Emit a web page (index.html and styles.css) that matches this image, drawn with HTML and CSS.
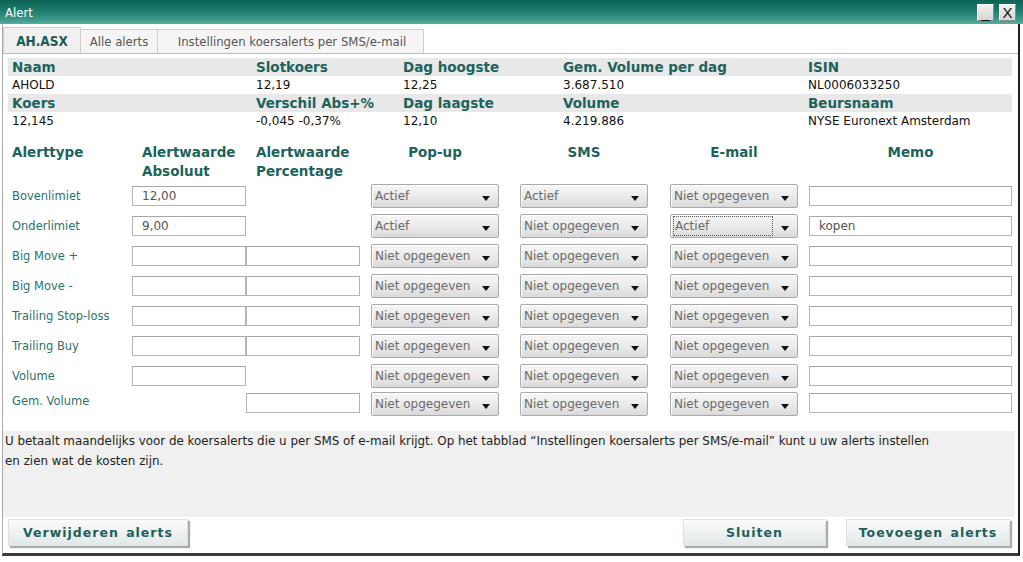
FILE: index.html
```html
<!DOCTYPE html>
<html lang="nl">
<head>
<meta charset="utf-8">
<title>Alert</title>
<link rel="stylesheet" href="styles.css">
</head>
<body>
<div class="titlebar">
  <span class="title">Alert</span>
  <div class="winbtns"><span class="wb">_</span><span class="wb">X</span></div>
</div>
<div class="frame">
  <div class="tabs">
    <div class="tab active">AH.ASX</div>
    <div class="tab t-all">Alle alerts</div>
    <div class="tab t-set">Instellingen koersalerts per SMS/e-mail</div>
  </div>

  <div class="info">
    <div class="irow head"><span>Naam</span><span>Slotkoers</span><span>Dag hoogste</span><span>Gem. Volume per dag</span><span>ISIN</span></div>
    <div class="irow"><span>AHOLD</span><span>12,19</span><span>12,25</span><span>3.687.510</span><span>NL0006033250</span></div>
    <div class="irow head"><span>Koers</span><span>Verschil Abs+%</span><span>Dag laagste</span><span>Volume</span><span>Beursnaam</span></div>
    <div class="irow"><span>12,145</span><span>-0,045 -0,37%</span><span>12,10</span><span>4.219.886</span><span>NYSE Euronext Amsterdam</span></div>
  </div>

  <div class="form">
    <div class="frow fhead">
      <div class="c">Alerttype</div>
      <div class="c ind">Alertwaarde<br>Absoluut</div>
      <div class="c ind">Alertwaarde<br>Percentage</div>
      <div class="c pop ctr">Pop-up</div>
      <div class="c sms ctr">SMS</div>
      <div class="c mail ctr">E-mail</div>
      <div class="c memo ctr">Memo</div>
    </div>

    <div class="frow">
      <div class="c lbl">Bovenlimiet</div>
      <div class="c"><div class="inp">12,00</div></div>
      <div class="c"></div>
      <div class="c pop"><div class="dd">Actief</div></div>
      <div class="c sms"><div class="dd">Actief</div></div>
      <div class="c mail"><div class="dd">Niet opgegeven</div></div>
      <div class="c memo"><div class="inp"></div></div>
    </div>
    <div class="frow">
      <div class="c lbl">Onderlimiet</div>
      <div class="c"><div class="inp">9,00</div></div>
      <div class="c"></div>
      <div class="c pop"><div class="dd">Actief</div></div>
      <div class="c sms"><div class="dd">Niet opgegeven</div></div>
      <div class="c mail"><div class="dd focus"><span class="ft">Actief</span></div></div>
      <div class="c memo"><div class="inp">kopen</div></div>
    </div>
    <div class="frow">
      <div class="c lbl">Big Move +</div>
      <div class="c"><div class="inp"></div></div>
      <div class="c"><div class="inp"></div></div>
      <div class="c pop"><div class="dd">Niet opgegeven</div></div>
      <div class="c sms"><div class="dd">Niet opgegeven</div></div>
      <div class="c mail"><div class="dd">Niet opgegeven</div></div>
      <div class="c memo"><div class="inp"></div></div>
    </div>
    <div class="frow">
      <div class="c lbl">Big Move -</div>
      <div class="c"><div class="inp"></div></div>
      <div class="c"><div class="inp"></div></div>
      <div class="c pop"><div class="dd">Niet opgegeven</div></div>
      <div class="c sms"><div class="dd">Niet opgegeven</div></div>
      <div class="c mail"><div class="dd">Niet opgegeven</div></div>
      <div class="c memo"><div class="inp"></div></div>
    </div>
    <div class="frow">
      <div class="c lbl">Trailing Stop-loss</div>
      <div class="c"><div class="inp"></div></div>
      <div class="c"><div class="inp"></div></div>
      <div class="c pop"><div class="dd">Niet opgegeven</div></div>
      <div class="c sms"><div class="dd">Niet opgegeven</div></div>
      <div class="c mail"><div class="dd">Niet opgegeven</div></div>
      <div class="c memo"><div class="inp"></div></div>
    </div>
    <div class="frow">
      <div class="c lbl">Trailing Buy</div>
      <div class="c"><div class="inp"></div></div>
      <div class="c"><div class="inp"></div></div>
      <div class="c pop"><div class="dd">Niet opgegeven</div></div>
      <div class="c sms"><div class="dd">Niet opgegeven</div></div>
      <div class="c mail"><div class="dd">Niet opgegeven</div></div>
      <div class="c memo"><div class="inp"></div></div>
    </div>
    <div class="frow">
      <div class="c lbl">Volume</div>
      <div class="c"><div class="inp"></div></div>
      <div class="c"></div>
      <div class="c pop"><div class="dd">Niet opgegeven</div></div>
      <div class="c sms"><div class="dd">Niet opgegeven</div></div>
      <div class="c mail"><div class="dd">Niet opgegeven</div></div>
      <div class="c memo"><div class="inp"></div></div>
    </div>
    <div class="frow last">
      <div class="c lbl">Gem. Volume</div>
      <div class="c"></div>
      <div class="c"><div class="inp"></div></div>
      <div class="c pop"><div class="dd">Niet opgegeven</div></div>
      <div class="c sms"><div class="dd">Niet opgegeven</div></div>
      <div class="c mail"><div class="dd">Niet opgegeven</div></div>
      <div class="c memo"><div class="inp"></div></div>
    </div>
  </div>

  <div class="notice">U betaalt maandelijks voor de koersalerts die u per SMS of e-mail krijgt. Op het tabblad “Instellingen koersalerts per SMS/e-mail” kunt u uw alerts instellen<br>en zien wat de kosten zijn.</div>

  <div class="buttons">
    <div class="btn b-del">Verwijderen alerts</div>
    <div class="btn b-close">Sluiten</div>
    <div class="btn b-add">Toevoegen alerts</div>
  </div>
</div>
</body>
</html>
```

FILE: styles.css
```css
* { box-sizing: border-box; }
html, body { margin: 0; padding: 0; }
body {
  width: 1023px;
  height: 562px;
  overflow: hidden;
  background: #ffffff;
  font-family: "DejaVu Sans", sans-serif;
  font-size: 12px;
  color: #111;
  display: flex;
  flex-direction: column;
}

/* title bar */
.titlebar {
  height: 24px;
  flex: none;
  display: flex;
  align-items: center;
  justify-content: space-between;
  background: linear-gradient(#0c6353 0%, #1e7d6d 45%, #3f9c8e 85%, #5aaea1 100%);
  padding: 0 7px 0 5px;
}
.title { color: #fff; font-size: 13px; font-family: "DejaVu Sans Condensed", sans-serif; }
.winbtns { display: flex; gap: 5px; }
.wb {
  width: 17px;
  height: 17px;
  background: linear-gradient(#f0f0ee, #d6d6d2);
  border: 1px solid #fafafa;
  border-right-color: #8a8a8a;
  border-bottom-color: #8a8a8a;
  color: #111;
  font-family: "Liberation Sans", sans-serif;
  font-size: 15px;
  line-height: 15px;
  text-align: center;
}

/* frame */
.frame {
  flex: 1;
  margin: 0 3px 6px 2px;
  border-left: 1px solid #a8a8a8;
  border-right: 2px solid #1e1e1e;
  border-bottom: 3px solid #3a3a3a;
  display: flex;
  flex-direction: column;
}

/* tabs */
.tabs {
  margin-top: 3px;
  height: 27px;
  flex: none;
  display: flex;
  align-items: flex-end;
  border-bottom: 1px solid #bdbdbd;
  padding-left: 0;
}
.tab {
  height: 24px;
  display: flex;
  align-items: center;
  justify-content: center;
  color: #555;
  font-family: "DejaVu Sans Condensed", sans-serif;
  font-size: 13px;
  background: #f5f5f5;
  border: 1px solid #cfcfcf;
  border-bottom: none;
  border-left: none;
}
.tab.active {
  width: 78px;
  height: 26px;
  background: #f0f0f0;
  border-left: 1px solid #cfcfcf;
  color: #1d5953;
  font-weight: bold;
  font-size: 13.5px;
}
.t-all { width: 77px; }
.t-set { width: 266px; padding-left: 3px; }

/* info table */
.info { margin: 4px 6px 0 5px; }
.irow {
  height: 18px;
  display: grid;
  grid-template-columns: 244px 147px 160px 245px 1fr;
  align-items: center;
  padding-left: 4px;
  font-size: 12px;
}
.irow.head {
  background: #e8e8e8;
  color: #1d635c;
  font-weight: bold;
  font-size: 13.5px;
}

/* alert form */
.form { margin-top: 13px; padding-left: 9px; }
.frow {
  height: 30px;
  display: grid;
  grid-template-columns: 120px 114px 114px 139px 149px 150px 214px;
  align-items: center;
}
.frow.fhead {
  height: 38px;
  align-items: start;
  color: #1d635c;
  font-weight: bold;
  font-size: 13.5px;
  line-height: 19px;
}
.fhead .ind { padding-left: 10px; }
.frow.last { height: 27px; align-items: start; }
.frow.last .lbl { line-height: 20px; }
.frow.last .inp { margin-top: 2px; }
.frow.last .dd { margin-top: 1px; }
.pop { padding-left: 11px; }
.sms { padding-left: 21px; }
.mail { padding-left: 22px; }
.memo { padding-left: 11px; }
.ctr { text-align: center; }
.lbl { color: #2a736c; font-size: 11.5px; }

.inp {
  height: 20px;
  border: 1px solid #b4b4b4;
  border-top-color: #a8a8a8;
  background: #fff;
  padding-left: 9px;
  color: #555;
  font-size: 12px;
  line-height: 18px;
}
.dd {
  position: relative;
  height: 24px;
  border: 1px solid #a9a9a9;
  border-radius: 2px;
  background: linear-gradient(#f6f6f6 0%, #ebebeb 50%, #dadada 100%);
  box-shadow: inset 1px 1px 0 #ffffff;
  color: #6a6a6a;
  font-size: 12px;
  line-height: 22px;
  padding-left: 3px;
}
.dd::after {
  content: "";
  position: absolute;
  right: 8px;
  top: 11px;
  border-left: 4px solid transparent;
  border-right: 4px solid transparent;
  border-top: 5px solid #111;
}
.dd.focus .ft {
  display: block;
  width: 100px;
  height: 20px;
  margin: 1px 0 0 -1px;
  line-height: 18px;
  padding-left: 1px;
  border: 1px dotted #555;
}

/* notice */
.notice {
  margin: 13px 3px 0 0;
  height: 86px;
  background: #f0f0f0;
  padding-left: 2px;
  line-height: 20px;
  color: #222;
  font-size: 11.9px;
}

/* buttons */
.buttons {
  margin-top: 2px;
  display: flex;
  padding: 0 8px 0 5px;
}
.btn {
  height: 27px;
  display: flex;
  align-items: center;
  justify-content: center;
  background: linear-gradient(#fbfcfc 0%, #eef2f2 50%, #e2e7e7 100%);
  border: 1px solid #dde1e1;
  box-shadow: 2px 2px 1px #a9adad;
  color: #1d5f58;
  font-weight: bold;
  font-size: 12.5px;
  letter-spacing: 1px;
  word-spacing: 2px;
}
.b-del { width: 180px; }
.b-close { width: 143px; margin-left: auto; }
.b-add { width: 164px; margin-left: 20px; }
```
